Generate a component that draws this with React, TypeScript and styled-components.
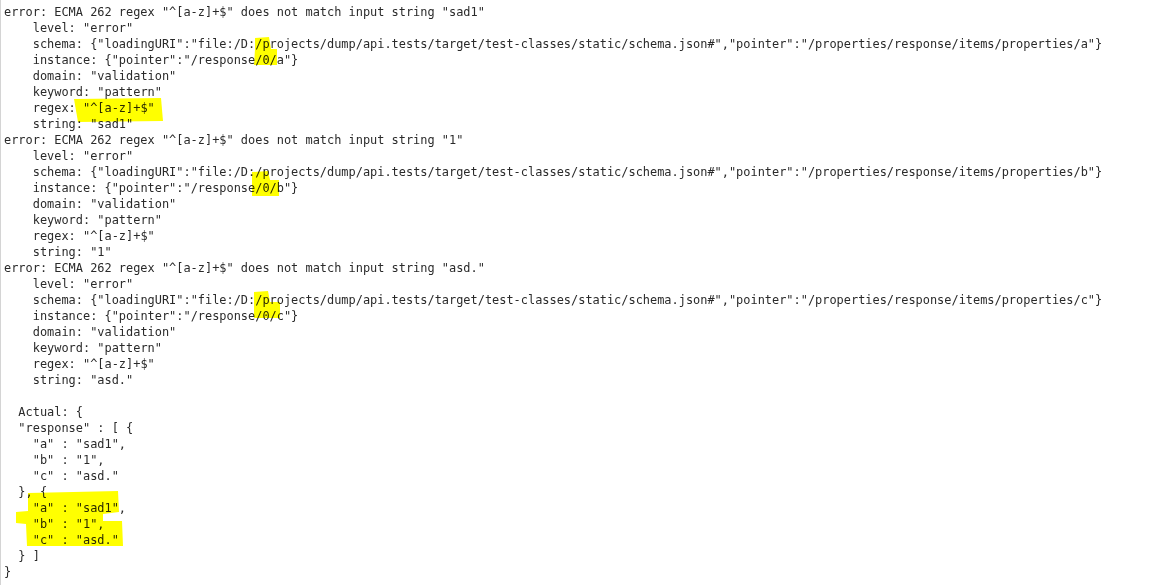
import React from "react";
import styled, { createGlobalStyle } from "styled-components";

const Global = createGlobalStyle`
  html, body { margin: 0; padding: 0; background: #ffffff; }
  body { width: 1159px; height: 585px; overflow: hidden; }
`;

const Page = styled.div`
  position: relative;
  width: 1159px;
  height: 585px;
  box-sizing: border-box;
  border-left: 1px solid #d4d4d4;
  background: #ffffff;
`;

const Console = styled.pre`
  margin: 0;
  padding: 4px 0 0 3px;
  font-family: "DejaVu Sans Mono", "Liberation Mono", monospace;
  font-size: 11.93px;
  line-height: 16px;
  color: #2a2a2a;
  display: flex;
  flex-direction: column;
`;

const Line = styled.span<{ $indent: number }>`
  display: block;
  white-space: pre;
  height: 16px;
  padding-left: ${(p) => p.$indent * 7.183}px;
`;

const Marker = styled.svg`
  position: absolute;
  left: 0;
  top: 0;
  width: 1159px;
  height: 585px;
  pointer-events: none;
  mix-blend-mode: multiply;
`;

type L = [number, string];

const block = (str: string, key: string): L[] => [
  [0, `error: ECMA 262 regex "^[a-z]+$" does not match input string "${str}"`],
  [4, `level: "error"`],
  [
    4,
    `schema: {"loadingURI":"file:/D:/projects/dump/api.tests/target/test-classes/static/schema.json#","pointer":"/properties/response/items/properties/${key}"}`,
  ],
  [4, `instance: {"pointer":"/response/0/${key}"}`],
  [4, `domain: "validation"`],
  [4, `keyword: "pattern"`],
  [4, `regex: "^[a-z]+$"`],
  [4, `string: "${str}"`],
];

const lines: L[] = [
  ...block("sad1", "a"),
  ...block("1", "b"),
  ...block("asd.", "c"),
  [0, ""],
  [2, "Actual: {"],
  [2, `"response" : [ {`],
  [4, `"a" : "sad1",`],
  [4, `"b" : "1",`],
  [4, `"c" : "asd."`],
  [2, "}, {"],
  [4, `"a" : "sad1",`],
  [4, `"b" : "1",`],
  [4, `"c" : "asd."`],
  [2, "} ]"],
  [0, "}"],
];

const marks = [
  "254,38 268,37 270,49 276,49 276,65 253,65 254,49",
  "73,99 160,98 162,121 77,122",
  "251,172 267,171 269,180 278,180 278,196 251,196",
  "253,292 267,291 269,302 279,302 279,318 253,318",
  "27,493 117,491 118,512 110,513 102,514 102,521 110,521 121,521 122,546 26,546 25,524 15,523 15,512 27,511",
];

export default function App() {
  return (
    <>
      <Global />
      <Page>
        <Console>
          {lines.map(([ind, text], i) => (
            <Line key={i} $indent={ind}>
              {text}
            </Line>
          ))}
        </Console>
        <Marker viewBox="0 0 1159 585">
          {marks.map((pts, i) => (
            <polygon key={i} points={pts} fill="#ffff00" />
          ))}
        </Marker>
      </Page>
    </>
  );
}
